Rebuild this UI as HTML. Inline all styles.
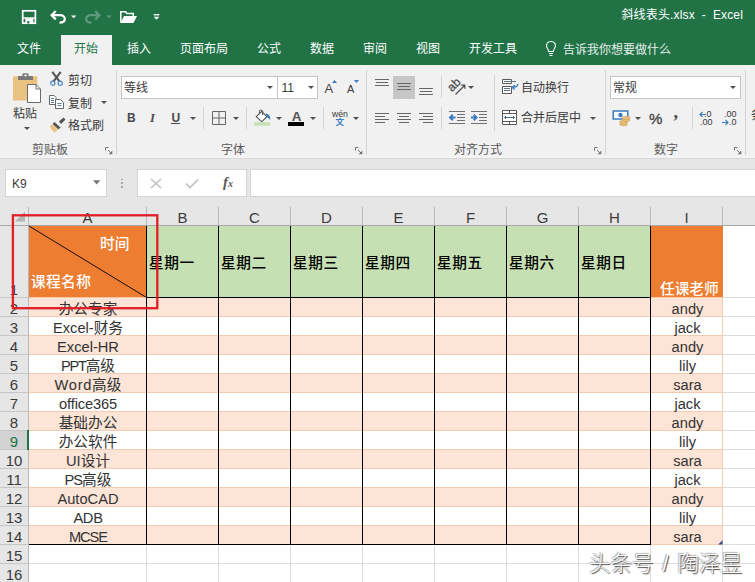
<!DOCTYPE html>
<html lang="zh-CN"><head><meta charset="utf-8"><title>斜线表头.xlsx - Excel</title>
<style>
html,body{margin:0;padding:0;}
body{width:755px;height:582px;overflow:hidden;position:relative;background:#fff;font-family:"Liberation Sans","Noto Sans CJK SC",sans-serif;color:#333;}
div,span{position:absolute;box-sizing:border-box;white-space:nowrap;}
svg{position:absolute;overflow:visible;}
.ui{font-size:12px;line-height:14px;color:#3a3a3a;}
.tab{font-size:12px;line-height:16px;color:#fff;top:41px;}
.grp{font-size:12px;line-height:14px;color:#5a5a5a;top:143px;}
.sep{width:1px;background:#d4d4d4;top:70px;height:85px;}
.ch{top:207px;height:18px;font-size:15px;line-height:21px;text-align:center;color:#3a3a3a;}
.rh{left:0;width:28px;font-size:15px;line-height:21px;color:#3a3a3a;text-align:center;}
.c{font-size:14.67px;line-height:23px;text-align:center;color:#333;}
.hd{font-size:14.67px;font-weight:500;color:#000;line-height:18px;}
.dd{width:0;height:0;border-left:3px solid transparent;border-right:3px solid transparent;border-top:3.200px solid #505050;}
</style></head><body>

<div style="left:0;top:0;width:755px;height:65px;background:#217346"></div>
<div style="left:61px;top:35px;width:51px;height:31px;background:#f1f1f1"></div>
<div style="left:0;top:65px;width:755px;height:93px;background:#f1f1f1"></div>
<div style="left:0;top:155px;width:755px;height:3px;background:linear-gradient(#f1f1f1,#f5f5f5)"></div>
<div style="left:0;top:159px;width:755px;height:48px;background:#e6e6e6"></div>
<div style="left:0;top:158px;width:755px;height:1px;background:#d8d8d8"></div>
<div style="right:12px;top:7px;font-size:12px;line-height:16px;color:#fff;letter-spacing:0.150px;">斜线表头.xlsx&nbsp; -&nbsp; Excel</div>
<div class="tab" style="left:17px;">文件</div>
<div class="tab" style="left:74px;color:#217346;">开始</div>
<div class="tab" style="left:127px;">插入</div>
<div class="tab" style="left:180px;">页面布局</div>
<div class="tab" style="left:257px;">公式</div>
<div class="tab" style="left:310px;">数据</div>
<div class="tab" style="left:363px;">审阅</div>
<div class="tab" style="left:416px;">视图</div>
<div class="tab" style="left:469px;">开发工具</div>
<div class="tab" style="left:563px;top:42px;color:#e6f0ea;">告诉我你想要做什么</div>
<svg style="left:0;top:0" width="200" height="34" viewBox="0 0 200 34">
<rect x="22.700" y="10.800" width="12.700" height="12.400" fill="none" stroke="#fff" stroke-width="1.700"/>
<rect x="23" y="17.300" width="12" height="1.500" fill="#fff"/>
<rect x="25.300" y="18.500" width="8" height="5" fill="#fff"/>
<rect x="27.300" y="21" width="2" height="2.500" fill="#217346"/>
<path d="M55.800 11 L51.600 15.200 L55.800 19.400 M52 15.200 H60 C63 15.200 64.800 17 64.800 19 C64.800 21.300 62.500 22.600 59.500 22.600" fill="none" stroke="#fff" stroke-width="2.200"/>
<path d="M71 15.500 L76.400 15.500 L73.700 18.300 Z" fill="#fff"/>
<path d="M95.200 11 L99.400 15.200 L95.200 19.400 M99 15.200 H91 C88 15.200 86.200 17 86.200 19 C86.200 21.300 88.500 22.600 91.500 22.600" fill="none" stroke="#5e9a7c" stroke-width="2.200"/>
<path d="M106.200 15.500 L111.600 15.500 L108.900 18.300 Z" fill="#5e9a7c"/>
<path d="M120.800 22.500 L120.800 11.800 L125.500 11.800 L127 13.600 L133.200 13.600 L133.200 16" fill="none" stroke="#fff" stroke-width="1.500"/>
<path d="M120.500 23 L124 16 L137 16 L133.500 23 Z" fill="#fff"/>
<rect x="153.700" y="14" width="5.600" height="1.400" fill="#fff"/>
<path d="M153.700 16.800 L159.300 16.800 L156.500 19.800 Z" fill="#fff"/>
</svg>
<svg style="left:544px;top:40px" width="14" height="18" viewBox="0 0 14 18"><path d="M7 1.500 C3.800 1.500 2.500 4 2.500 5.800 C2.500 8 4.500 9 4.700 11.500 L9.300 11.500 C9.500 9 11.500 8 11.500 5.800 C11.500 4 10.200 1.500 7 1.500 Z M5 13.500 L9 13.500 M5.500 15.500 L8.500 15.500" fill="none" stroke="#fff" stroke-width="1.100"/></svg>
<div class="sep" style="left:116px"></div>
<div class="sep" style="left:366px"></div>
<div class="sep" style="left:605px"></div>
<div class="sep" style="left:745px"></div>
<div style="left:494px;top:75px;width:1px;height:56px;background:#d4d4d4"></div>
<svg style="left:10px;top:70px" width="34" height="36" viewBox="0 0 34 36">
<rect x="3" y="6.200" width="24.300" height="24.300" rx="1" fill="#eac282"/>
<path d="M8 10 L8 7 Q8 6 9 6 L12.500 6 L12.500 4.200 Q12.500 3.200 13.500 3.200 L17.500 3.200 Q18.500 3.200 18.500 4.200 L18.500 6 L22 6 Q23 6 23 7 L23 10 Z" fill="#777"/>
<rect x="14.300" y="4.600" width="2.500" height="1.700" fill="#f1f1f1"/>
<path d="M17.500 14.500 L26 14.500 L30.500 19 L30.500 32.500 L17.500 32.500 Z" fill="#fff" stroke="#6a6a6a" stroke-width="1"/>
<path d="M26 14.500 L26 19 L30.500 19" fill="none" stroke="#6a6a6a" stroke-width="1"/>
</svg>
<div class="ui" style="left:13px;top:107px;font-size:12px;line-height:14px;">粘贴</div>
<div class="dd" style="left:23.500px;top:127px"></div>
<svg style="left:49px;top:70px" width="18" height="18" viewBox="0 0 18 18">
<path d="M3.300 1.800 L10.600 11.600 M11.700 1.800 L4.400 11.600" stroke="#555" stroke-width="2.100" fill="none"/>
<circle cx="3.800" cy="13.200" r="2.100" fill="none" stroke="#4a86c5" stroke-width="1.200"/>
<circle cx="11.200" cy="13.200" r="2.100" fill="none" stroke="#4a86c5" stroke-width="1.200"/></svg>
<div class="ui" style="left:68px;top:74px;">剪切</div>
<svg style="left:48px;top:94px" width="18" height="16" viewBox="0 0 18 16">
<path d="M1.500 1.500 L6 1.500 L8 3.500 L8 10.500 L1.500 10.500 Z" fill="#fff" stroke="#666" stroke-width="1"/>
<path d="M3 4.500 L6 4.500 M3 6.500 L6 6.500 M3 8.500 L6 8.500" stroke="#5f7f9f" stroke-width="1"/>
<path d="M7.500 5.500 L12.500 5.500 L15.500 8.500 L15.500 14.500 L7.500 14.500 Z" fill="#fff" stroke="#666" stroke-width="1"/>
<path d="M9.500 9.500 L13.500 9.500 M9.500 11.500 L13.500 11.500" stroke="#5f7f9f" stroke-width="1"/></svg>
<div class="ui" style="left:68px;top:97px;">复制</div>
<div class="dd" style="left:101px;top:101px"></div>
<svg style="left:48px;top:116px" width="20" height="18" viewBox="0 0 20 18">
<path d="M11 5.500 L15.500 1.500 L17.500 3.500 L13 8 Z" fill="#555"/>
<path d="M6.500 6 L12.500 11.500 L10.500 13.500 L4.500 8 Z" fill="#555"/>
<path d="M1.500 10 L5 8.500 L10 13.500 L6.500 16.500 L4 14 Z" fill="#eac282"/></svg>
<div class="ui" style="left:68px;top:119px;">格式刷</div>
<div class="grp" style="left:32px;">剪贴板</div>
<svg style="left:105px;top:146.5px" width="8" height="8" viewBox="0 0 8 8"><path d="M0.500 3.500 L0.500 0.500 L3.500 0.500 M3 3 L6.500 6.500" fill="none" stroke="#777" stroke-width="1"/><path d="M7.300 3.600 L7.300 7.300 L3.600 7.300 Z" fill="#777"/></svg>
<svg style="left:355px;top:146.5px" width="8" height="8" viewBox="0 0 8 8"><path d="M0.500 3.500 L0.500 0.500 L3.500 0.500 M3 3 L6.500 6.500" fill="none" stroke="#777" stroke-width="1"/><path d="M7.300 3.600 L7.300 7.300 L3.600 7.300 Z" fill="#777"/></svg>
<svg style="left:594px;top:146.5px" width="8" height="8" viewBox="0 0 8 8"><path d="M0.500 3.500 L0.500 0.500 L3.500 0.500 M3 3 L6.500 6.500" fill="none" stroke="#777" stroke-width="1"/><path d="M7.300 3.600 L7.300 7.300 L3.600 7.300 Z" fill="#777"/></svg>
<svg style="left:734px;top:146.5px" width="8" height="8" viewBox="0 0 8 8"><path d="M0.500 3.500 L0.500 0.500 L3.500 0.500 M3 3 L6.500 6.500" fill="none" stroke="#777" stroke-width="1"/><path d="M7.300 3.600 L7.300 7.300 L3.600 7.300 Z" fill="#777"/></svg>
<div style="left:121px;top:76px;width:157px;height:23px;background:#fff;border:1px solid #c6c6c6"></div>
<div style="left:277px;top:76px;width:41px;height:23px;background:#fff;border:1px solid #c6c6c6"></div>
<div class="ui" style="left:124px;top:81px;">等线</div>
<div class="ui" style="left:281.500px;top:81px;font-size:12px;">11</div>
<div class="dd" style="left:267px;top:86px"></div>
<div class="dd" style="left:307.500px;top:86px"></div>
<div class="ui" style="left:324.600px;top:80.500px;font-size:13px;line-height:16px;color:#444;">A</div>
<div class="ui" style="left:347px;top:82px;font-size:11px;line-height:14px;">A</div>
<svg style="left:332px;top:80px" width="5" height="3"><path d="M0 3 L2.500 0 L5 3 Z" fill="#3b7bbf"/></svg>
<svg style="left:354px;top:80px" width="5" height="3"><path d="M0 0 L5 0 L2.500 3 Z" fill="#3b7bbf"/></svg>
<div class="ui" style="left:127px;top:111px;font-size:12px;font-weight:bold;color:#4a4a4a;">B</div>
<div class="ui" style="left:150px;top:111px;font-size:12.500px;font-weight:bold;font-style:italic;font-family:'Liberation Serif',serif;color:#4a4a4a;">I</div>
<div class="ui" style="left:171.500px;top:111px;font-size:12px;font-weight:bold;color:#4a4a4a;">U</div>
<div style="left:171px;top:123px;width:9px;height:1px;background:#4a4a4a"></div>
<div class="dd" style="left:189.500px;top:117px"></div>
<div style="left:203px;top:107px;width:1px;height:22px;background:#d4d4d4"></div>
<svg style="left:212px;top:111px" width="14" height="14"><path d="M0.500 0.500 H13.500 V13.500 H0.500 Z M7 0.500 V13.500 M0.500 7 H13.500" fill="none" stroke="#666" stroke-width="1"/></svg>
<div class="dd" style="left:232.500px;top:117px"></div>
<div style="left:246px;top:107px;width:1px;height:22px;background:#d4d4d4"></div>
<svg style="left:254px;top:108px" width="18" height="20" viewBox="0 0 18 20">
<path d="M2.300 8.700 L7.600 3.600 L13 8.700 L7.800 13.600 Z" fill="#fff" stroke="#555" stroke-width="1.100"/>
<path d="M5.400 6.200 V3.200 Q5.400 2.300 6.300 2.300 H7.800 Q8.700 2.300 8.700 3.200 V7.200" stroke="#555" stroke-width="1" fill="none"/>
<path d="M11.200 5.800 C14.500 5.300 16.800 8 16.200 12.300 C15.600 10.800 14.600 10.300 13.200 9.300 Z" fill="#3b7bbf"/>
<rect x="0" y="14.200" width="16" height="3.500" fill="#c5e0b3"/></svg>
<div class="dd" style="left:276px;top:117px"></div>
<div class="ui" style="left:291.800px;top:108.500px;font-size:13.500px;line-height:16px;font-weight:bold;color:#555;">A</div>
<div style="left:288px;top:122.300px;width:16px;height:3.600px;background:#000"></div>
<div class="dd" style="left:310px;top:117px"></div>
<div style="left:323px;top:107px;width:1px;height:22px;background:#d4d4d4"></div>
<div class="ui" style="left:332px;top:109px;font-size:8.700px;line-height:10px;">wén</div>
<div class="ui" style="left:335.500px;top:116.500px;font-size:8.500px;line-height:11px;color:#3b7bbf;font-weight:bold;">文</div>
<div class="dd" style="left:352.500px;top:117px"></div>
<div class="grp" style="left:221px;">字体</div>
<div style="left:393px;top:76px;width:22px;height:23px;background:#c6c6c6"></div>
<svg style="left:375px;top:79px" width="14" height="12"><rect x="0.0" y="0" width="14" height="1" fill="#666"/><rect x="1.0" y="3" width="12" height="1" fill="#666"/><rect x="0.0" y="6" width="14" height="1" fill="#666"/></svg>
<svg style="left:397px;top:83px" width="14" height="12"><rect x="0.0" y="0" width="14" height="1" fill="#666"/><rect x="1.0" y="3" width="12" height="1" fill="#666"/><rect x="0.0" y="6" width="14" height="1" fill="#666"/></svg>
<svg style="left:419px;top:88px" width="14" height="12"><rect x="0.0" y="0" width="14" height="1" fill="#666"/><rect x="1.0" y="3" width="12" height="1" fill="#666"/><rect x="0.0" y="6" width="14" height="1" fill="#666"/></svg>
<svg style="left:375px;top:113px" width="14" height="12"><rect x="0" y="0" width="14" height="1" fill="#666"/><rect x="0" y="3" width="10" height="1" fill="#666"/><rect x="0" y="6" width="14" height="1" fill="#666"/><rect x="0" y="9" width="10" height="1" fill="#666"/></svg>
<svg style="left:397px;top:113px" width="14" height="12"><rect x="0.0" y="0" width="14" height="1" fill="#666"/><rect x="2.0" y="3" width="10" height="1" fill="#666"/><rect x="0.0" y="6" width="14" height="1" fill="#666"/><rect x="2.0" y="9" width="10" height="1" fill="#666"/></svg>
<svg style="left:419px;top:113px" width="14" height="12"><rect x="0" y="0" width="14" height="1" fill="#666"/><rect x="4" y="3" width="10" height="1" fill="#666"/><rect x="0" y="6" width="14" height="1" fill="#666"/><rect x="4" y="9" width="10" height="1" fill="#666"/></svg>
<div style="left:441px;top:76px;width:1px;height:22px;background:#d4d4d4"></div>
<div style="left:441px;top:107px;width:1px;height:22px;background:#d4d4d4"></div>
<svg style="left:447px;top:78px" width="20" height="18" viewBox="0 0 20 18"><text x="0" y="0" font-size="12" font-family="Liberation Sans, sans-serif" fill="#4a4a4a" stroke="#4a4a4a" stroke-width="0.300" transform="translate(5 14.300) rotate(-45)">ab</text><path d="M8.500 16.500 L17.500 7.500 M14.300 7.200 L17.800 7.200 L17.800 10.700" fill="none" stroke="#4a4a4a" stroke-width="1.200"/></svg>
<div class="dd" style="left:468px;top:86px"></div>
<svg style="left:449px;top:111px" width="16" height="14"><path d="M0 0.500 H16 M8 3.500 H16 M8 6.500 H16 M8 9.500 H16 M0 12.500 H16" stroke="#707070" stroke-width="1" fill="none"/><path d="M6.500 6.500 H1 M3.800 3.700 L1 6.500 L3.800 9.300" stroke="#3b7bbf" stroke-width="2" fill="none"/></svg>
<svg style="left:471px;top:111px" width="16" height="14"><path d="M0 0.500 H16 M8 3.500 H16 M8 6.500 H16 M8 9.500 H16 M0 12.500 H16" stroke="#707070" stroke-width="1" fill="none"/><path d="M0 6.500 H5.500 M2.700 3.700 L5.500 6.500 L2.700 9.300" stroke="#3b7bbf" stroke-width="2" fill="none"/></svg>
<svg style="left:502px;top:79px" width="17" height="16"><path d="M0.500 0.500 H9.500 V4.500 H0.500 Z M0.500 7.500 H9.500 V14.500 H0.500 Z" stroke="#5a5a5a" fill="#fff"/><path d="M2 2.500 H14 M2 9.500 H8 M2 11.500 H8" stroke="#5f7488" fill="none"/><path d="M15.800 5 C15.800 8 13 8.400 10.200 8.400 M12.800 6.200 L10 8.400 L12.800 10.600" stroke="#3b7bbf" fill="none" stroke-width="1.300"/></svg>
<div class="ui" style="left:521px;top:81px;">自动换行</div>
<svg style="left:502px;top:110px" width="16" height="15"><path d="M0.500 0.500 H14.500 V14.500 H0.500 Z M0.500 3.500 H14.500 M0.500 11.500 H14.500 M7.500 0.500 V3.500 M7.500 11.500 V14.500" stroke="#5a5a5a" fill="#fff"/><path d="M2.500 7.500 H12.500 M4 6 L2.500 7.500 L4 9 M11 6 L12.500 7.500 L11 9" stroke="#4f6e8c" fill="none"/></svg>
<div class="ui" style="left:521px;top:111px;">合并后居中</div>
<div class="dd" style="left:590px;top:117px"></div>
<div class="grp" style="left:454px;">对齐方式</div>
<div style="left:610px;top:76px;width:131px;height:23px;background:#fff;border:1px solid #c6c6c6"></div>
<div class="ui" style="left:613px;top:81px;">常规</div>
<div class="dd" style="left:730px;top:86px"></div>
<svg style="left:612px;top:109px" width="20" height="18" viewBox="0 0 20 18"><rect x="1.200" y="2" width="14.600" height="8" fill="#fff" stroke="#3b7bbf" stroke-width="1.500"/><circle cx="8.500" cy="6" r="2.200" fill="#3b7bbf"/><ellipse cx="11.500" cy="15.300" rx="4" ry="1.500" fill="#eac282" stroke="#c99a4a" stroke-width="0.600"/><ellipse cx="11.500" cy="13" rx="4" ry="1.500" fill="#eac282" stroke="#c99a4a" stroke-width="0.600"/><ellipse cx="14" cy="11" rx="4" ry="1.500" fill="#eac282" stroke="#c99a4a" stroke-width="0.600"/><ellipse cx="14" cy="8.800" rx="4" ry="1.500" fill="#eac282" stroke="#c99a4a" stroke-width="0.600"/></svg>
<div class="dd" style="left:635px;top:117px"></div>
<div class="ui" style="left:649px;top:110px;font-size:15px;line-height:18px;color:#444;-webkit-text-stroke:0.350px #444;">%</div>
<div class="ui" style="left:673.500px;top:102px;font-size:18px;line-height:20px;font-weight:bold;font-family:'Liberation Serif',serif;color:#4a4a4a;">,</div>
<div style="left:692px;top:107px;width:1px;height:22px;background:#d4d4d4"></div>
<div class="ui" style="left:704px;top:110px;font-size:9px;line-height:9px;">.0</div>
<div class="ui" style="left:700px;top:118px;font-size:9px;line-height:9px;">.00</div>
<svg style="left:699px;top:111px" width="7" height="7"><path d="M7 3.500 H1 M3.500 1 L1 3.500 L3.500 6" stroke="#3b7bbf" fill="none" stroke-width="1.200"/></svg>
<div class="ui" style="left:724px;top:110px;font-size:9px;line-height:9px;">.00</div>
<div class="ui" style="left:729px;top:118px;font-size:9px;line-height:9px;">.0</div>
<svg style="left:722px;top:119px" width="7" height="7"><path d="M0 3.500 H6 M3.500 1 L6 3.500 L3.500 6" stroke="#3b7bbf" fill="none" stroke-width="1.200"/></svg>
<div class="grp" style="left:654px;">数字</div>
<div class="ui" style="left:751px;top:108px;font-size:13px;">条</div>
<div style="left:5px;top:169px;width:102px;height:28px;background:#fff;border:1px solid #d4d4d4"></div>
<div class="ui" style="left:12px;top:177px;font-size:12px;">K9</div>
<svg style="left:93px;top:180px" width="8" height="5"><path d="M0 0.300 L7.400 0.300 L3.700 4.400 Z" fill="#777"/></svg>
<div style="left:121.200px;top:178.5px;width:1.600px;height:1.700px;background:#a6a6a6"></div>
<div style="left:121.200px;top:182.2px;width:1.600px;height:1.700px;background:#a6a6a6"></div>
<div style="left:121.200px;top:185.9px;width:1.600px;height:1.700px;background:#a6a6a6"></div>
<div style="left:137px;top:169px;width:110px;height:28px;background:#fff;border:1px solid #d4d4d4"></div>
<svg style="left:150px;top:178px" width="12" height="11"><path d="M1 1 L11 10 M11 1 L1 10" stroke="#c2c2c2" stroke-width="1.600" fill="none"/></svg>
<svg style="left:185px;top:178px" width="14" height="11"><path d="M1 5.500 L5 9.500 L13 1.500" stroke="#c2c2c2" stroke-width="1.700" fill="none"/></svg>
<div class="ui" style="left:223px;top:173px;font-size:15px;line-height:18px;font-style:italic;font-weight:bold;font-family:'Liberation Serif',serif;color:#5a5a5a;">f<span style="position:static;font-size:10px;">x</span></div>
<div style="left:250px;top:169px;width:510px;height:28px;background:#fff;border:1px solid #d4d4d4"></div>
<div style="left:0;top:207px;width:755px;height:19px;background:#e6e6e6"></div>
<div style="left:0;top:226px;width:29px;height:360px;background:#e6e6e6"></div>
<svg style="left:14px;top:210px" width="13" height="13"><path d="M11 1.500 L11 11.600 L1 11.600 Z" fill="#b4b4b4"/></svg>
<div class="ch" style="left:29px;width:117px">A</div>
<div style="left:146px;top:207px;width:1px;height:18px;background:#b9b9b9"></div>
<div class="ch" style="left:147px;width:71px">B</div>
<div style="left:218px;top:207px;width:1px;height:18px;background:#b9b9b9"></div>
<div class="ch" style="left:219px;width:71px">C</div>
<div style="left:290px;top:207px;width:1px;height:18px;background:#b9b9b9"></div>
<div class="ch" style="left:291px;width:71px">D</div>
<div style="left:362px;top:207px;width:1px;height:18px;background:#b9b9b9"></div>
<div class="ch" style="left:363px;width:71px">E</div>
<div style="left:434px;top:207px;width:1px;height:18px;background:#b9b9b9"></div>
<div class="ch" style="left:435px;width:71px">F</div>
<div style="left:506px;top:207px;width:1px;height:18px;background:#b9b9b9"></div>
<div class="ch" style="left:507px;width:71px">G</div>
<div style="left:578px;top:207px;width:1px;height:18px;background:#b9b9b9"></div>
<div class="ch" style="left:579px;width:71px">H</div>
<div style="left:650px;top:207px;width:1px;height:18px;background:#b9b9b9"></div>
<div class="ch" style="left:651px;width:71px">I</div>
<div style="left:722px;top:207px;width:1px;height:18px;background:#b9b9b9"></div>
<div class="ch" style="left:723px;width:76px"></div>
<div style="left:799px;top:207px;width:1px;height:18px;background:#b9b9b9"></div>
<div style="left:28px;top:207px;width:1px;height:18px;background:#b9b9b9"></div>
<div style="left:0;top:225px;width:755px;height:1px;background:#a8a8a8"></div>
<div style="left:29px;top:226px;width:118px;height:71px;background:#ed7d31"></div>
<div style="left:147px;top:226px;width:504px;height:71px;background:#c6e0b4"></div>
<div style="left:651px;top:226px;width:72px;height:71px;background:#ed7d31"></div>
<div style="left:29px;top:297px;width:694px;height:1px;background:#f4c7a8"></div>
<div style="left:29px;top:298px;width:694px;height:18px;background:#fce4d6"></div>
<div style="left:29px;top:316px;width:694px;height:1px;background:#f2cbb0"></div>
<div style="left:29px;top:317px;width:694px;height:18px;background:#fff"></div>
<div style="left:29px;top:335px;width:694px;height:1px;background:#f2cbb0"></div>
<div style="left:29px;top:336px;width:694px;height:18px;background:#fce4d6"></div>
<div style="left:29px;top:354px;width:694px;height:1px;background:#f2cbb0"></div>
<div style="left:29px;top:355px;width:694px;height:18px;background:#fff"></div>
<div style="left:29px;top:373px;width:694px;height:1px;background:#f2cbb0"></div>
<div style="left:29px;top:374px;width:694px;height:18px;background:#fce4d6"></div>
<div style="left:29px;top:392px;width:694px;height:1px;background:#f2cbb0"></div>
<div style="left:29px;top:393px;width:694px;height:18px;background:#fff"></div>
<div style="left:29px;top:411px;width:694px;height:1px;background:#f2cbb0"></div>
<div style="left:29px;top:412px;width:694px;height:18px;background:#fce4d6"></div>
<div style="left:29px;top:430px;width:694px;height:1px;background:#f2cbb0"></div>
<div style="left:29px;top:431px;width:694px;height:18px;background:#fff"></div>
<div style="left:29px;top:449px;width:694px;height:1px;background:#f2cbb0"></div>
<div style="left:29px;top:450px;width:694px;height:18px;background:#fce4d6"></div>
<div style="left:29px;top:468px;width:694px;height:1px;background:#f2cbb0"></div>
<div style="left:29px;top:469px;width:694px;height:18px;background:#fff"></div>
<div style="left:29px;top:487px;width:694px;height:1px;background:#f2cbb0"></div>
<div style="left:29px;top:488px;width:694px;height:18px;background:#fce4d6"></div>
<div style="left:29px;top:506px;width:694px;height:1px;background:#f2cbb0"></div>
<div style="left:29px;top:507px;width:694px;height:18px;background:#fff"></div>
<div style="left:29px;top:525px;width:694px;height:1px;background:#f2cbb0"></div>
<div style="left:29px;top:526px;width:694px;height:18px;background:#fce4d6"></div>
<div style="left:29px;top:544px;width:694px;height:1px;background:#f2cbb0"></div>
<div style="left:723px;top:297px;width:33px;height:1px;background:#dcdcdc"></div>
<div style="left:723px;top:316px;width:33px;height:1px;background:#dcdcdc"></div>
<div style="left:723px;top:335px;width:33px;height:1px;background:#dcdcdc"></div>
<div style="left:723px;top:354px;width:33px;height:1px;background:#dcdcdc"></div>
<div style="left:723px;top:373px;width:33px;height:1px;background:#dcdcdc"></div>
<div style="left:723px;top:392px;width:33px;height:1px;background:#dcdcdc"></div>
<div style="left:723px;top:411px;width:33px;height:1px;background:#dcdcdc"></div>
<div style="left:723px;top:430px;width:33px;height:1px;background:#dcdcdc"></div>
<div style="left:723px;top:449px;width:33px;height:1px;background:#dcdcdc"></div>
<div style="left:723px;top:468px;width:33px;height:1px;background:#dcdcdc"></div>
<div style="left:723px;top:487px;width:33px;height:1px;background:#dcdcdc"></div>
<div style="left:723px;top:506px;width:33px;height:1px;background:#dcdcdc"></div>
<div style="left:723px;top:525px;width:33px;height:1px;background:#dcdcdc"></div>
<div style="left:723px;top:544px;width:33px;height:1px;background:#dcdcdc"></div>
<div style="left:723px;top:563px;width:33px;height:1px;background:#dcdcdc"></div>
<div style="left:723px;top:582px;width:33px;height:1px;background:#dcdcdc"></div>
<div style="left:722px;top:298px;width:1px;height:247px;background:#f3cdb0"></div>
<div style="left:722px;top:545px;width:1px;height:40px;background:#dcdcdc"></div>
<div style="left:146px;top:545px;width:1px;height:40px;background:#dcdcdc"></div>
<div style="left:218px;top:545px;width:1px;height:40px;background:#dcdcdc"></div>
<div style="left:290px;top:545px;width:1px;height:40px;background:#dcdcdc"></div>
<div style="left:362px;top:545px;width:1px;height:40px;background:#dcdcdc"></div>
<div style="left:434px;top:545px;width:1px;height:40px;background:#dcdcdc"></div>
<div style="left:506px;top:545px;width:1px;height:40px;background:#dcdcdc"></div>
<div style="left:578px;top:545px;width:1px;height:40px;background:#dcdcdc"></div>
<div style="left:650px;top:545px;width:1px;height:40px;background:#dcdcdc"></div>
<div style="left:722px;top:545px;width:1px;height:40px;background:#dcdcdc"></div>
<div style="left:799px;top:545px;width:1px;height:40px;background:#dcdcdc"></div>
<div style="left:29px;top:563px;width:727px;height:1px;background:#dcdcdc"></div>
<div style="left:29px;top:582px;width:727px;height:1px;background:#dcdcdc"></div>
<div class="rh" style="top:279px;">1</div>
<div class="rh" style="top:298px;height:19px;">2</div>
<div style="left:0;top:297px;width:28px;height:1px;background:#c6c6c6"></div>
<div class="rh" style="top:317px;height:19px;">3</div>
<div style="left:0;top:316px;width:28px;height:1px;background:#c6c6c6"></div>
<div class="rh" style="top:336px;height:19px;">4</div>
<div style="left:0;top:335px;width:28px;height:1px;background:#c6c6c6"></div>
<div class="rh" style="top:355px;height:19px;">5</div>
<div style="left:0;top:354px;width:28px;height:1px;background:#c6c6c6"></div>
<div class="rh" style="top:374px;height:19px;">6</div>
<div style="left:0;top:373px;width:28px;height:1px;background:#c6c6c6"></div>
<div class="rh" style="top:393px;height:19px;">7</div>
<div style="left:0;top:392px;width:28px;height:1px;background:#c6c6c6"></div>
<div class="rh" style="top:412px;height:19px;">8</div>
<div style="left:0;top:411px;width:28px;height:1px;background:#c6c6c6"></div>
<div style="left:0;top:431px;width:29px;height:18px;background:#d2d2d2;"></div>
<div class="rh" style="top:431px;height:19px;color:#217346;">9</div>
<div style="left:0;top:430px;width:28px;height:1px;background:#c6c6c6"></div>
<div class="rh" style="top:450px;height:19px;">10</div>
<div style="left:0;top:449px;width:28px;height:1px;background:#c6c6c6"></div>
<div class="rh" style="top:469px;height:19px;">11</div>
<div style="left:0;top:468px;width:28px;height:1px;background:#c6c6c6"></div>
<div class="rh" style="top:488px;height:19px;">12</div>
<div style="left:0;top:487px;width:28px;height:1px;background:#c6c6c6"></div>
<div class="rh" style="top:507px;height:19px;">13</div>
<div style="left:0;top:506px;width:28px;height:1px;background:#c6c6c6"></div>
<div class="rh" style="top:526px;height:19px;">14</div>
<div style="left:0;top:525px;width:28px;height:1px;background:#c6c6c6"></div>
<div class="rh" style="top:545px;height:19px;">15</div>
<div style="left:0;top:544px;width:28px;height:1px;background:#c6c6c6"></div>
<div class="rh" style="top:564px;height:19px;">16</div>
<div style="left:0;top:563px;width:28px;height:1px;background:#c6c6c6"></div>
<div style="left:28px;top:226px;width:1px;height:360px;background:#b9b9b9"></div>
<div style="left:27px;top:430px;width:2px;height:20px;background:#217346"></div>
<div style="left:146px;top:226px;width:1px;height:319px;background:#000"></div>
<div style="left:218px;top:226px;width:1px;height:319px;background:#000"></div>
<div style="left:290px;top:226px;width:1px;height:319px;background:#000"></div>
<div style="left:362px;top:226px;width:1px;height:319px;background:#000"></div>
<div style="left:434px;top:226px;width:1px;height:319px;background:#000"></div>
<div style="left:506px;top:226px;width:1px;height:319px;background:#000"></div>
<div style="left:578px;top:226px;width:1px;height:319px;background:#000"></div>
<div style="left:650px;top:226px;width:1px;height:319px;background:#000"></div>
<div style="left:147px;top:297px;width:504px;height:1px;background:#000"></div>
<div style="left:29px;top:544px;width:622px;height:1px;background:#000"></div>
<svg style="left:29px;top:226px" width="118" height="72"><path d="M0 0 L117.500 71.5" stroke="#000" stroke-width="0.900"/></svg>
<div class="hd" style="left:100px;top:234.500px;color:#fff;">时间</div>
<div class="hd" style="left:31px;top:273px;color:#fff;letter-spacing:0.400px;">课程名称</div>
<div class="hd" style="left:149px;top:254px;letter-spacing:0.6px;">星期一</div>
<div class="hd" style="left:221px;top:254px;letter-spacing:0.6px;">星期二</div>
<div class="hd" style="left:293px;top:254px;letter-spacing:0.6px;">星期三</div>
<div class="hd" style="left:365px;top:254px;letter-spacing:0.6px;">星期四</div>
<div class="hd" style="left:437px;top:254px;letter-spacing:0.6px;">星期五</div>
<div class="hd" style="left:509px;top:254px;letter-spacing:0.6px;">星期六</div>
<div class="hd" style="left:581px;top:254px;letter-spacing:0.6px;">星期日</div>
<div class="hd" style="left:660px;top:280px;color:#fff;">任课老师</div>
<div class="c" style="left:29.500px;top:298px;width:117px;height:19px">办公专家</div>
<div class="c" style="left:652px;top:298px;width:71px;height:19px">andy</div>
<div class="c" style="left:29.500px;top:317px;width:117px;height:19px">Excel-财务</div>
<div class="c" style="left:652px;top:317px;width:71px;height:19px">jack</div>
<div class="c" style="left:29.500px;top:336px;width:117px;height:19px">Excel-HR</div>
<div class="c" style="left:652px;top:336px;width:71px;height:19px">andy</div>
<div class="c" style="left:29.500px;top:355px;width:117px;height:19px"><span style="position:static;letter-spacing:-1.3px">PPT</span>高级</div>
<div class="c" style="left:652px;top:355px;width:71px;height:19px">lily</div>
<div class="c" style="left:29.500px;top:374px;width:117px;height:19px"><span style="position:static;letter-spacing:0.7px">Word</span>高级</div>
<div class="c" style="left:652px;top:374px;width:71px;height:19px">sara</div>
<div class="c" style="left:29.500px;top:393px;width:117px;height:19px"><span style="position:static;letter-spacing:-0.15px">office365</span></div>
<div class="c" style="left:652px;top:393px;width:71px;height:19px">jack</div>
<div class="c" style="left:29.500px;top:412px;width:117px;height:19px">基础办公</div>
<div class="c" style="left:652px;top:412px;width:71px;height:19px">andy</div>
<div class="c" style="left:29.500px;top:431px;width:117px;height:19px">办公软件</div>
<div class="c" style="left:652px;top:431px;width:71px;height:19px">lily</div>
<div class="c" style="left:29.500px;top:450px;width:117px;height:19px">UI设计</div>
<div class="c" style="left:652px;top:450px;width:71px;height:19px">sara</div>
<div class="c" style="left:29.500px;top:469px;width:117px;height:19px"><span style="position:static;letter-spacing:-1.0px">PS</span>高级</div>
<div class="c" style="left:652px;top:469px;width:71px;height:19px">jack</div>
<div class="c" style="left:29.500px;top:488px;width:117px;height:19px">AutoCAD</div>
<div class="c" style="left:652px;top:488px;width:71px;height:19px">andy</div>
<div class="c" style="left:29.500px;top:507px;width:117px;height:19px"><span style="position:static;letter-spacing:-0.3px">ADB</span></div>
<div class="c" style="left:652px;top:507px;width:71px;height:19px">lily</div>
<div class="c" style="left:29.500px;top:526px;width:117px;height:19px"><span style="position:static;letter-spacing:-1.1px">MCSE</span></div>
<div class="c" style="left:652px;top:526px;width:71px;height:19px">sara</div>
<svg style="left:717px;top:539px" width="6" height="6"><path d="M5.500 1.200 L5.500 5.500 L1.200 5.500 Z" fill="#2f4a8a"/></svg>
<svg style="left:0;top:0" width="200" height="330"><rect x="12.900" y="215.300" width="144.400" height="92.900" fill="none" stroke="#e01f27" stroke-width="2.300"/></svg>
<div style="left:589px;top:549px;font-size:21.500px;line-height:30px;font-weight:300;word-spacing:3px;color:#fff;text-shadow:1px 1px 1px #4a4a4a,0 0 1px #8a8a8a,-1px -1px 1px #bbb;">头条号 / 陶泽昱</div>
</body></html>
